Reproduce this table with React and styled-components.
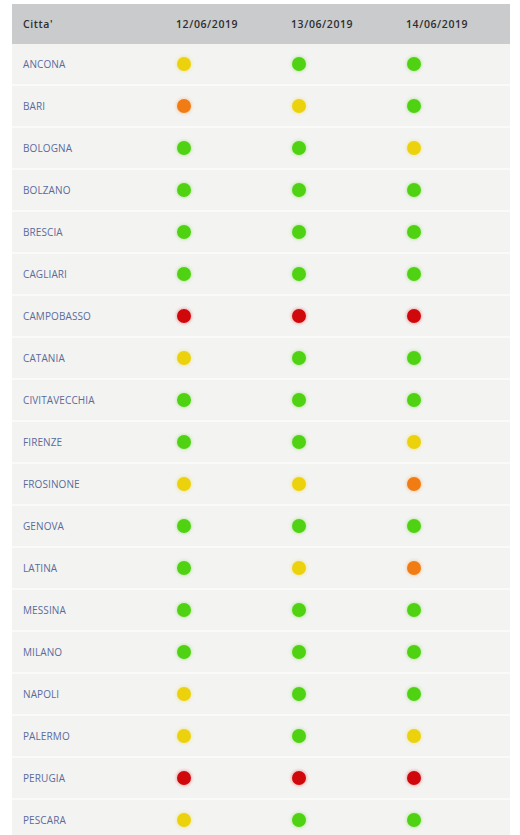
import React from 'react';
import styled, { createGlobalStyle } from 'styled-components';

const GlobalStyle = createGlobalStyle`
  body {
    margin: 0;
    background: #ffffff;
    font-family: "Open Sans", "Liberation Sans", sans-serif;
  }
`

const Page = styled.div`
  padding: 4px 10px 0 12px;
`

const Table = styled.div`
  width: 498px;
  display: grid;
  grid-template-columns: 153px 115px 115px 115px;
`

const HeaderCell = styled.div`
  background-color: #c9cbcd;
  height: 40px;
  display: flex;
  align-items: center;
  padding-left: 11px;
  font-size: 10.5px;
  font-weight: 600;
  color: #2e2e30;
  letter-spacing: 0.6px;
`

const Cell = styled.div`
  background-color: #f3f3f1;
  height: 40px;
  display: flex;
  align-items: center;
  padding-left: ${({ first }) => (first ? '11px' : '12px')};
  border-bottom: 2px solid #fafaf8;
`

const City = styled.a`
  font-size: 10px;
  color: #5a6b9c;
  text-transform: uppercase;
  text-decoration: none;
  letter-spacing: 0.1px;
`

const COLORS = {
  G: '#4fd212',
  Y: '#ecd20c',
  O: '#f27c14',
  R: '#d0080c',
};

const Dot = styled.span`
  width: 14px;
  height: 14px;
  border-radius: 50%;
  background-color: ${({ level }) => COLORS[level]};
  box-shadow: 0 0 3px 1px ${({ level }) => COLORS[level]}44;
`

const dates = ['12/06/2019', '13/06/2019', '14/06/2019'];

const rows = [
  ['Ancona', 'YGG'],
  ['Bari', 'OYG'],
  ['Bologna', 'GGY'],
  ['Bolzano', 'GGG'],
  ['Brescia', 'GGG'],
  ['Cagliari', 'GGG'],
  ['Campobasso', 'RRR'],
  ['Catania', 'YGG'],
  ['Civitavecchia', 'GGG'],
  ['Firenze', 'GGY'],
  ['Frosinone', 'YYO'],
  ['Genova', 'GGG'],
  ['Latina', 'GYO'],
  ['Messina', 'GGG'],
  ['Milano', 'GGG'],
  ['Napoli', 'YGG'],
  ['Palermo', 'YGY'],
  ['Perugia', 'RRR'],
  ['Pescara', 'YGG'],
];

export default function App() {
  return (
    <Page>
      <GlobalStyle />
      <Table>
        <HeaderCell>Citta'</HeaderCell>
        {dates.map(d => <HeaderCell key={d}>{d}</HeaderCell>)}
        {rows.map(([city, levels]) => (
          <React.Fragment key={city}>
            <Cell first><City href="#">{city}</City></Cell>
            {levels.split('').map((l, i) => (
              <Cell key={i}><Dot level={l} /></Cell>
            ))}
          </React.Fragment>
        ))}
      </Table>
    </Page>
  );
}
